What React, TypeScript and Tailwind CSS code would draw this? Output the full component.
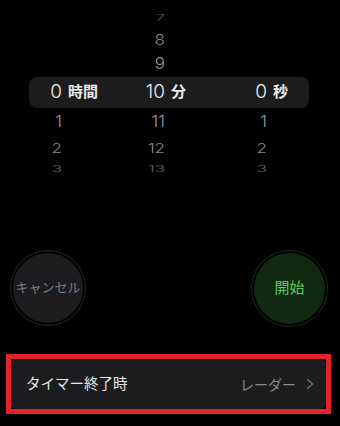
import React from 'react';

const font = { fontFamily: 'Inter, "Noto Sans CJK JP", sans-serif' };

type WheelRow = {
  h: string;
  scale: string;
  color: string;
  a: string;
  b: string;
  c: string;
};

const above: WheelRow[] = [
  { h: 'h-[22px]', scale: 'scale-y-[0.5]', color: 'text-[#5a5a5a]', a: '', b: '7', c: '' },
  { h: 'h-[23px]', scale: 'scale-y-[0.85]', color: 'text-[#8a8a8a]', a: '', b: '8', c: '' },
  { h: 'h-[26px]', scale: 'scale-y-[0.97]', color: 'text-[#9a9a9a]', a: '', b: '9', c: '' },
];

const below: WheelRow[] = [
  { h: 'h-[28px]', scale: 'scale-y-[0.97]', color: 'text-[#9c9c9c]', a: '1', b: '11', c: '1' },
  { h: 'h-[21px]', scale: 'scale-y-[0.8]', color: 'text-[#8a8a8a]', a: '2', b: '12', c: '2' },
  { h: 'h-[15px]', scale: 'scale-y-[0.5]', color: 'text-[#666666]', a: '3', b: '13', c: '3' },
  { h: 'h-[6px]', scale: 'scale-y-[0.3]', color: 'text-[#333333]', a: '4', b: '14', c: '4' },
];

const cols = 'grid grid-cols-[33px_63px_40px_62px_40px_42px] items-center';

function Row({ r }: { r: WheelRow }) {
  return (
    <div className={`${cols} ${r.h} overflow-hidden text-[17px] font-light ${r.color}`}>
      <div className={`text-right ${r.scale}`}>{r.a}</div>
      <div />
      <div className={`text-right ${r.scale}`}>{r.b}</div>
      <div />
      <div className={`text-right ${r.scale}`}>{r.c}</div>
      <div />
    </div>
  );
}

function Picker() {
  return (
    <div className="ml-[29px] w-[280px] pt-[6px]">
      {above.map((r) => (
        <Row key={r.b} r={r} />
      ))}
      <div className={`${cols} h-[31px] rounded-[8px] bg-[#1c1c1e] text-[#ececec]`}>
        <div className="text-right text-[19px] font-light">0</div>
        <div className="pl-[6px] text-[15px] font-bold">時間</div>
        <div className="text-right text-[19px] font-light">10</div>
        <div className="pl-[6px] text-[15px] font-bold">分</div>
        <div className="text-right text-[19px] font-light">0</div>
        <div className="pl-[6px] text-[15px] font-bold">秒</div>
      </div>
      {below.map((r) => (
        <Row key={r.b} r={r} />
      ))}
    </div>
  );
}

export default function App() {
  return (
    <div className="h-[426px] w-[340px] overflow-hidden bg-black" style={font}>
      <Picker />

      <div className="mt-[72px] flex justify-between pl-[10px] pr-[12px]">
        <div className="h-[76px] w-[76px] rounded-full border-[1.5px] border-[#2a2a2c] p-[2px]">
          <div className="flex h-full w-full items-center justify-center rounded-full bg-[#1c1c1e] text-[13px] text-[#7c7c80]">
            キャンセル
          </div>
        </div>
        <div className="h-[77px] w-[77px] rounded-full border-[1.5px] border-[#16301a] p-[2px]">
          <div className="flex h-full w-full items-center justify-center rounded-full bg-[#10290f] text-[15px] text-[#5ccb63]">
            開始
          </div>
        </div>
      </div>

      <div className="ml-[6px] mt-[27px] h-[60px] w-[325px] border-[5px] border-[#e3222b] bg-black">
        <div className="flex h-full items-center justify-between rounded-[6px] bg-[#1c1c1e] pl-[15px] pr-[12px]">
          <span className="text-[14.5px] text-[#e6e6e6]">タイマー終了時</span>
          <div className="flex items-center gap-[10px]">
            <span className="text-[14px] text-[#8a8a8e]">レーダー</span>
            <svg width="8" height="12" viewBox="0 0 8 12" fill="none">
              <path d="M1.5 1.5 L6.5 6 L1.5 10.5" stroke="#6b6b6f" strokeWidth="1.6" strokeLinecap="round" strokeLinejoin="round" />
            </svg>
          </div>
        </div>
      </div>
    </div>
  );
}
